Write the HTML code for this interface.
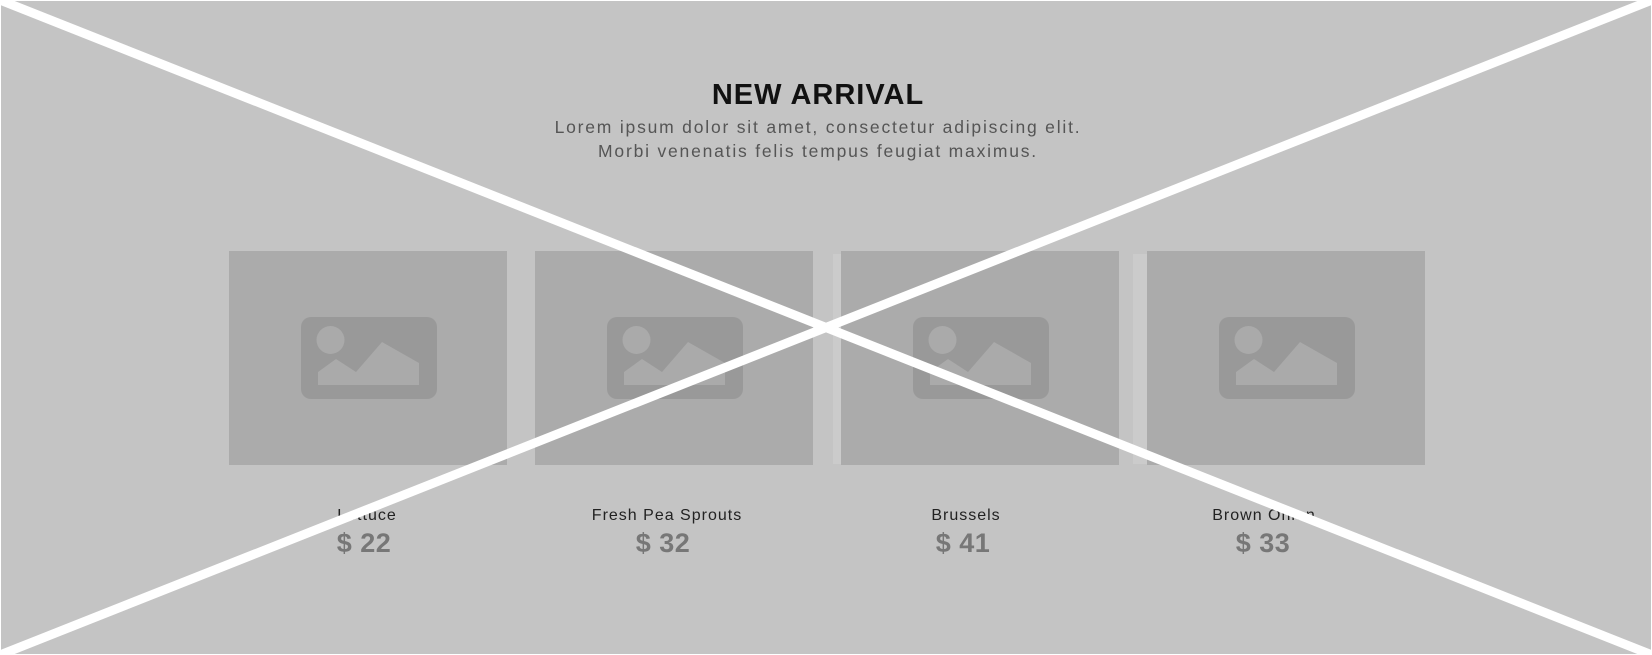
<!DOCTYPE html>
<html><head><style>
body{margin:0;width:1652px;height:655px;background:#c4c4c4;position:relative;overflow:hidden;font-family:"Liberation Sans",sans-serif}
.t{position:absolute;left:-8px;width:1652px;text-align:center}
h1{margin:0;font-size:29px;font-weight:bold;color:#111;top:79px;letter-spacing:1px}
.sub{font-size:17.5px;color:#555;letter-spacing:1.8px;line-height:24px;top:115px}
.card{position:absolute;top:251px;width:278px;height:214px;background:#ababab}
.strip{position:absolute;top:254px;height:210px;background:#cbcbcb}
.card svg{position:absolute;left:72px;top:66px}
.name{position:absolute;top:507px;width:300px;text-align:center;font-size:16px;color:#222;letter-spacing:1px}
.price{position:absolute;top:528px;width:300px;text-align:center;font-size:27px;font-weight:bold;color:#777;letter-spacing:0.5px}
</style></head><body>
<h1 class="t">NEW ARRIVAL</h1>
<div class="t sub">Lorem ipsum dolor sit amet, consectetur adipiscing elit.<br>Morbi venenatis felis tempus feugiat maximus.</div>
<div class="strip" style="left:833px;width:8px"></div>
<div class="strip" style="left:1133px;width:14px"></div>
<div class="card" style="left:229px"><svg width="140" height="86" viewBox="0 0 140 86"><rect x="0" y="0" width="136" height="82" rx="10" fill="#999"/><circle cx="29.5" cy="23" r="14" fill="#aaa"/><path d="M17 68V55l18-13 20 13 26-30 37 21v22z" fill="#aaa"/></svg></div>
<div class="card" style="left:535px"><svg width="140" height="86" viewBox="0 0 140 86"><rect x="0" y="0" width="136" height="82" rx="10" fill="#999"/><circle cx="29.5" cy="23" r="14" fill="#aaa"/><path d="M17 68V55l18-13 20 13 26-30 37 21v22z" fill="#aaa"/></svg></div>
<div class="card" style="left:841px"><svg width="140" height="86" viewBox="0 0 140 86"><rect x="0" y="0" width="136" height="82" rx="10" fill="#999"/><circle cx="29.5" cy="23" r="14" fill="#aaa"/><path d="M17 68V55l18-13 20 13 26-30 37 21v22z" fill="#aaa"/></svg></div>
<div class="card" style="left:1147px"><svg width="140" height="86" viewBox="0 0 140 86"><rect x="0" y="0" width="136" height="82" rx="10" fill="#999"/><circle cx="29.5" cy="23" r="14" fill="#aaa"/><path d="M17 68V55l18-13 20 13 26-30 37 21v22z" fill="#aaa"/></svg></div>
<div class="name" style="left:217px">Lettuce</div><div class="price" style="left:214px">$ 22</div>
<div class="name" style="left:517px">Fresh Pea Sprouts</div><div class="price" style="left:513px">$ 32</div>
<div class="name" style="left:816px">Brussels</div><div class="price" style="left:813px">$ 41</div>
<div class="name" style="left:1114px">Brown Onion</div><div class="price" style="left:1113px">$ 33</div>
<svg style="position:absolute;left:0;top:0" width="1652" height="655"><line x1="0" y1="0" x2="1652" y2="655" stroke="#fff" stroke-width="9"/><line x1="0" y1="655" x2="1652" y2="0" stroke="#fff" stroke-width="9"/><rect x="0.5" y="0.5" width="1651" height="654" fill="none" stroke="#fff" stroke-width="1"/></svg>
</body></html>
